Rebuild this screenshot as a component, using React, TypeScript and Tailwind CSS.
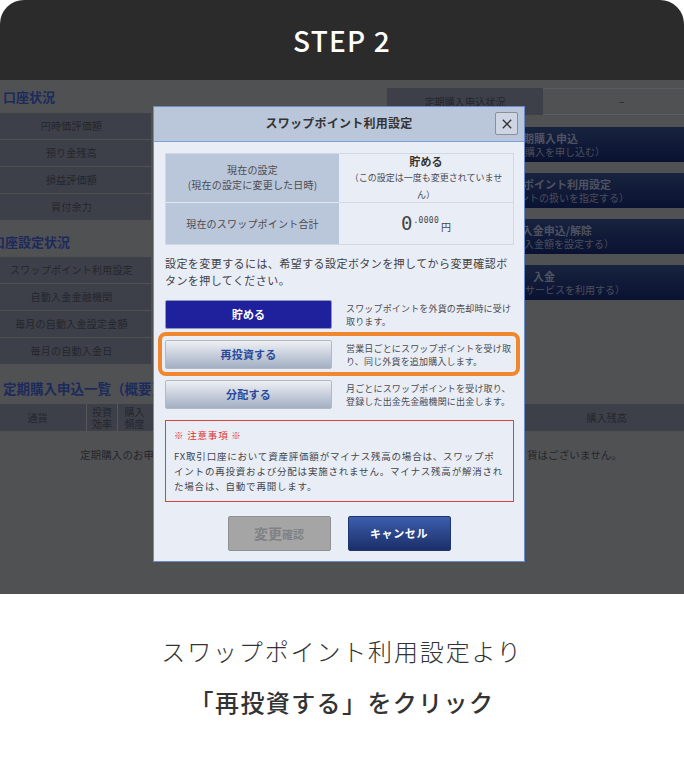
const FONT = "font-['Noto_Sans_CJK_JP','Noto_Sans',sans-serif]";

const ACCOUNT_ROWS = ["円時価評価額", "預り金残高", "損益評価額", "買付余力"];
const SETTING_ROWS = ["スワップポイント利用設定", "自動入金金融機関", "毎月の自動入金設定金額", "毎月の自動入金日"];

// only the part of each button that shows beside the dialog
const SIDE_BUTTONS = [
  { title: "期購入申込", sub: "購入を申し込む）", titlePr: "pr-[106px]", subPr: "pr-[79px]" },
  { title: "ポイント利用設定", sub: "ントの扱いを指定する）", titlePr: "pr-[73px]", subPr: "pr-[55px]" },
  { title: "入金申込/解除", sub: "入金額を設定する）", titlePr: "pr-[92px]", subPr: "pr-[70px]" },
  { title: "入金", sub: "サービスを利用する）", titlePr: "pr-[129px]", subPr: "pr-[59px]" },
];

const OPTIONS = [
  { label: "貯める", active: true, text: ["スワップポイントを外貨の売却時に受け", "取ります。"] },
  { label: "再投資する", active: false, text: ["営業日ごとにスワップポイントを受け取", "り、同じ外貨を追加購入します。"] },
  { label: "分配する", active: false, text: ["月ごとにスワップポイントを受け取り、", "登録した出金先金融機関に出金します。"] },
];

function StatusRows({ rows }: { rows: string[] }) {
  return (
    <div className="flex flex-col gap-[1px]">
      {rows.map((row) => (
        <div
          key={row}
          className="h-[26px] pr-[8px] pb-[1px] bg-[#3d4049] flex items-center justify-center text-[10px] tracking-[0.25px] text-[#24262c] whitespace-nowrap"
        >
          {row}
        </div>
      ))}
    </div>
  );
}

function SwapDialog() {
  return (
    <div className="absolute left-[153px] top-[26px] w-[372px] h-[456px] border border-[#6c8cc9] bg-[#e9edf5]">
      {/* Title bar */}
      <div className="h-[35px] pb-[2px] bg-[#bac6da] border-b border-[#7f9fd8] flex items-center justify-center relative">
        <span className="text-[12px] font-bold tracking-[0.25px] text-[#333]">スワップポイント利用設定</span>
        <button className="absolute right-[6px] top-[5px] w-[23px] h-[23px] bg-[#cfd6e3] border border-[#8b8f96] rounded-[2px] flex items-center justify-center">
          <svg width="10" height="10" viewBox="0 0 10 10" fill="none" stroke="#333" strokeWidth="1.3">
            <path d="M0.8 0.8l8.4 8.4M9.2 0.8l-8.4 8.4" />
          </svg>
        </button>
      </div>

      <div className="px-[11px] pt-[11px]">
        {/* Current setting */}
        <div className="w-[349px] border border-[#d2d8e3] grid grid-cols-[173px_1fr] text-[#4a4c52]">
          <div className="h-[49px] pb-[2px] bg-[#bac6da] flex flex-col items-center justify-center text-[10px] leading-[15px] tracking-[0.2px] border-b border-[#e3e7ef]">
            <span>現在の設定</span>
            <span>(現在の設定に変更した日時)</span>
          </div>
          <div className="h-[49px] border-b border-[#d2d8e3] flex flex-col items-center">
            <span className="text-[11px] leading-[15px] font-bold tracking-[0.2px] text-[#333]">貯める</span>
            <span className="text-[9px] leading-[17px] text-center whitespace-nowrap">
              （この設定は一度も変更されていませ
              <br />
              ん）
            </span>
          </div>
          <div className="h-[41px] bg-[#bac6da] flex items-center justify-center text-[10px] tracking-[0.2px]">
            現在のスワップポイント合計
          </div>
          <div className="h-[41px] flex items-center justify-center font-['DejaVu_Sans_Mono',monospace] text-[#444]">
            <span className="text-[19px] leading-none font-light">0</span>
            <span className="text-[8px] -mt-[6px] ml-[1px] tracking-[0.3px]">.0000</span>
            <span className="text-[10px] mt-[5px] ml-[2px] font-['Noto_Sans_CJK_JP',sans-serif]">円</span>
          </div>
        </div>

        <p className="mt-[10px] text-[11px] leading-[17px] tracking-[0.43px] text-[#3f4146] whitespace-nowrap">
          設定を変更するには、希望する設定ボタンを押してから変更確認ボ
          <br />
          タンを押してください。
        </p>

        {/* Options */}
        <div className="mt-[11px] flex flex-col gap-[11px]">
          {OPTIONS.map((option) => (
            <div key={option.label} className="flex items-center h-[29px]">
              <div
                className={
                  option.active
                    ? "w-[167px] h-[29px] shrink-0 rounded-[2px] border border-[#8d96b8] bg-[#1f219c] text-white flex items-center justify-center text-[11px] font-bold tracking-[0.2px]"
                    : "w-[167px] h-[29px] shrink-0 rounded-[2px] border border-[#b4b8bf] bg-gradient-to-b from-[#eef0f4] to-[#a3afc3] text-[#2b4a9c] flex items-center justify-center text-[11px] font-bold tracking-[0.2px]"
                }
              >
                {option.label}
              </div>
              <div className="ml-[14px] text-[9px] leading-[13px] tracking-[0.17px] text-[#4a4c52] whitespace-nowrap">
                {option.text.map((line) => (
                  <div key={line}>{line}</div>
                ))}
              </div>
            </div>
          ))}
        </div>

        {/* Notice */}
        <div className="mt-[11px] w-[349px] h-[82px] border border-[#d9433d] px-[8px] pt-[7px] text-[9.5px] leading-[15px] tracking-[0.8px] text-[#44464c] whitespace-nowrap">
          <div className="text-[#e2332f] mb-[6px]">※ 注意事項 ※</div>
          <p>
            FX取引口座において資産評価額がマイナス残高の場合は、スワップポ
            <br />
            イントの再投資および分配は実施されません。マイナス残高が解消され
            <br />
            た場合は、自動で再開します。
          </p>
        </div>

        {/* Actions */}
        <div className="mt-[14px] flex justify-center gap-[17px]">
          <div className="w-[103px] h-[35px] rounded-[2px] border border-[#8f9092] bg-[#a5a5a5] flex items-center justify-center font-bold text-[#808184]">
            <span className="text-[14px]">変更</span>
            <span className="text-[11px] mt-[2px]">確認</span>
          </div>
          <div className="w-[103px] h-[35px] rounded-[2px] border border-[#1d3570] bg-gradient-to-b from-[#3c5fae] to-[#1b2f68] flex items-center justify-center text-[11px] font-bold tracking-[0.6px] text-white">
            キャンセル
          </div>
        </div>
      </div>

      {/* Highlight round the second option */}
      <div className="absolute left-[4px] top-[225px] w-[362px] h-[44px] rounded-[8px] border-[4px] border-[#f0862e]" />
    </div>
  );
}

export default function App() {
  return (
    <div className={`${FONT} w-[684px] h-[778px] bg-white overflow-hidden`}>
      <header className="h-[80px] bg-[#2b2b2b] rounded-t-[24px] flex items-center justify-center pb-[1px]">
        <h1 className="text-[28px] font-medium tracking-[1.2px] text-white">STEP 2</h1>
      </header>

      {/* Dimmed screen */}
      <div className="relative h-[514px] bg-[#505153] overflow-hidden">
        <div className="flex">
          <div className="w-[151px] shrink-0">
            <h2 className="h-[33px] pl-[3px] pt-[6px] text-[13px] leading-[22px] font-bold text-[#1c2a5c] whitespace-nowrap">口座状況</h2>
            <StatusRows rows={ACCOUNT_ROWS} />
            <h2 className="h-[37px] -ml-[8px] pt-[11px] text-[13px] leading-[22px] font-bold text-[#1c2a5c] whitespace-nowrap">口座設定状況</h2>
            <StatusRows rows={SETTING_ROWS} />
          </div>

          <div className="ml-[236px] flex-1 pt-[8px]">
            <div className="flex h-[27px] text-[10px] tracking-[0.15px] text-[#24262c]">
              <div className="w-[156px] pb-[1px] bg-[#3d4049] flex items-center justify-center">定期購入申込状況</div>
              <div className="flex-1 pl-[16px] flex items-center justify-center border-y border-[#5c5d60]">−</div>
            </div>
            <div className="mt-[12px] flex flex-col gap-[11px]">
              {SIDE_BUTTONS.map((btn) => (
                <div
                  key={btn.title}
                  className="h-[35px] pb-[1px] bg-gradient-to-b from-[#17233f] to-[#0a1231] flex flex-col items-end justify-center whitespace-nowrap"
                >
                  <span className={`${btn.titlePr} text-[11px] leading-[14px] font-bold text-[#4f5361]`}>{btn.title}</span>
                  <span className={`${btn.subPr} text-[10px] leading-[13px] text-[#4b4f5c]`}>{btn.sub}</span>
                </div>
              ))}
            </div>
          </div>
        </div>

        <h2 className="mt-[13px] pl-[3px] text-[13.5px] leading-[22px] font-bold text-[#1c2a5c] whitespace-nowrap">定期購入申込一覧（概要）</h2>

        <div className="mt-[5px] h-[27px] bg-[#3d4049] flex text-[#24262c]">
          <div className="w-[87px] pr-[11px] flex items-center justify-center text-[10px] tracking-[0.1px] border-r border-[#55575c]">通貨</div>
          <div className="w-[31px] flex items-center justify-center text-center text-[10px] leading-[12px] border-r border-[#55575c]">投資<br />効率</div>
          <div className="w-[33px] flex items-center justify-center text-center text-[10px] leading-[12px]">購入<br />頻度</div>
          <div className="flex-1 flex items-center justify-end pr-[57px] text-[10px] tracking-[0.1px]">購入残高</div>
        </div>

        <div className="mt-[15px] pl-[80px] pr-[62px] flex justify-between text-[10.5px] leading-[18px] tracking-[0.1px] text-[#24262c] whitespace-nowrap">
          <span>定期購入のお申</span>
          <span>貨はございません。</span>
        </div>

        <SwapDialog />
      </div>

      <div className="pt-[37px] text-center text-[#333]">
        <p className="text-[24px] leading-[40px] font-light tracking-[1.85px]">スワップポイント利用設定より</p>
        <p className="mt-[11px] text-[24px] leading-[40px] font-medium tracking-[1.4px]">「再投資する」をクリック</p>
      </div>
    </div>
  );
}
